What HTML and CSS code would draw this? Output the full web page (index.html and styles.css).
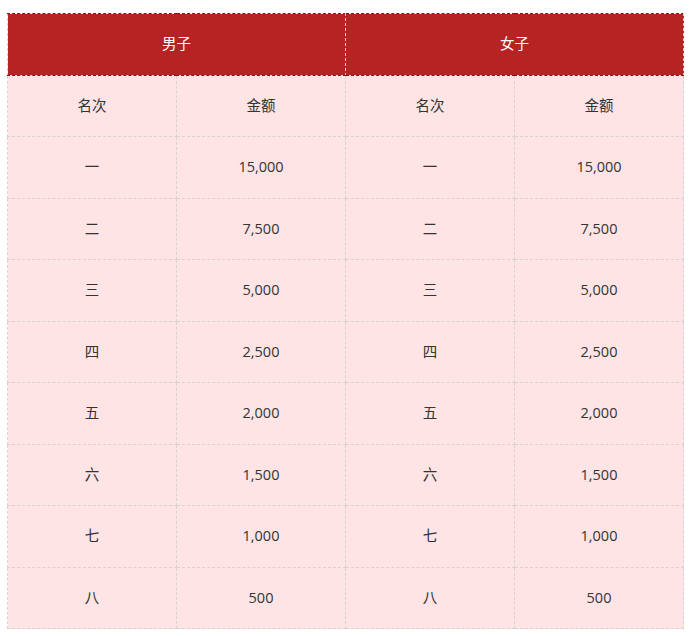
FILE: index.html
```html
<!DOCTYPE html>
<html lang="zh">
<head>
<meta charset="utf-8">
<link rel="stylesheet" href="styles.css">
</head>
<body>
<table class="prize">
  <thead>
    <tr class="head"><th colspan="2">男子</th><th colspan="2">女子</th></tr>
  </thead>
  <tbody>
    <tr><td>名次</td><td>金额</td><td>名次</td><td>金额</td></tr>
    <tr><td>一</td><td>15,000</td><td>一</td><td>15,000</td></tr>
    <tr><td>二</td><td>7,500</td><td>二</td><td>7,500</td></tr>
    <tr><td>三</td><td>5,000</td><td>三</td><td>5,000</td></tr>
    <tr><td>四</td><td>2,500</td><td>四</td><td>2,500</td></tr>
    <tr><td>五</td><td>2,000</td><td>五</td><td>2,000</td></tr>
    <tr><td>六</td><td>1,500</td><td>六</td><td>1,500</td></tr>
    <tr><td>七</td><td>1,000</td><td>七</td><td>1,000</td></tr>
    <tr><td>八</td><td>500</td><td>八</td><td>500</td></tr>
  </tbody>
</table>
</body>
</html>
```

FILE: styles.css
```css
html, body {
  margin: 0;
  padding: 0;
  background: #ffffff;
}
body {
  padding: 13px 0 0 7px;
  font-family: "Microsoft YaHei", "Open Sans", "Noto Sans CJK SC", sans-serif;
  font-size: 14.5px;
  color: #333333;
}
.prize {
  border-collapse: collapse;
  table-layout: fixed;
  width: 677px;
}
.prize th,
.prize td {
  height: 60.5px;
  padding: 0;
  text-align: center;
  vertical-align: middle;
  border: 1px dashed #d9d2d2;
  font-weight: normal;
  line-height: 20px;
}
.prize th {
  background: #b72323;
  color: #ffffff;
  border-color: #e8c9c9;
  border-top-color: #8a1a1a;
  border-bottom-color: #7a1818;
}
.prize td {
  background: #fee4e4;
}
```
